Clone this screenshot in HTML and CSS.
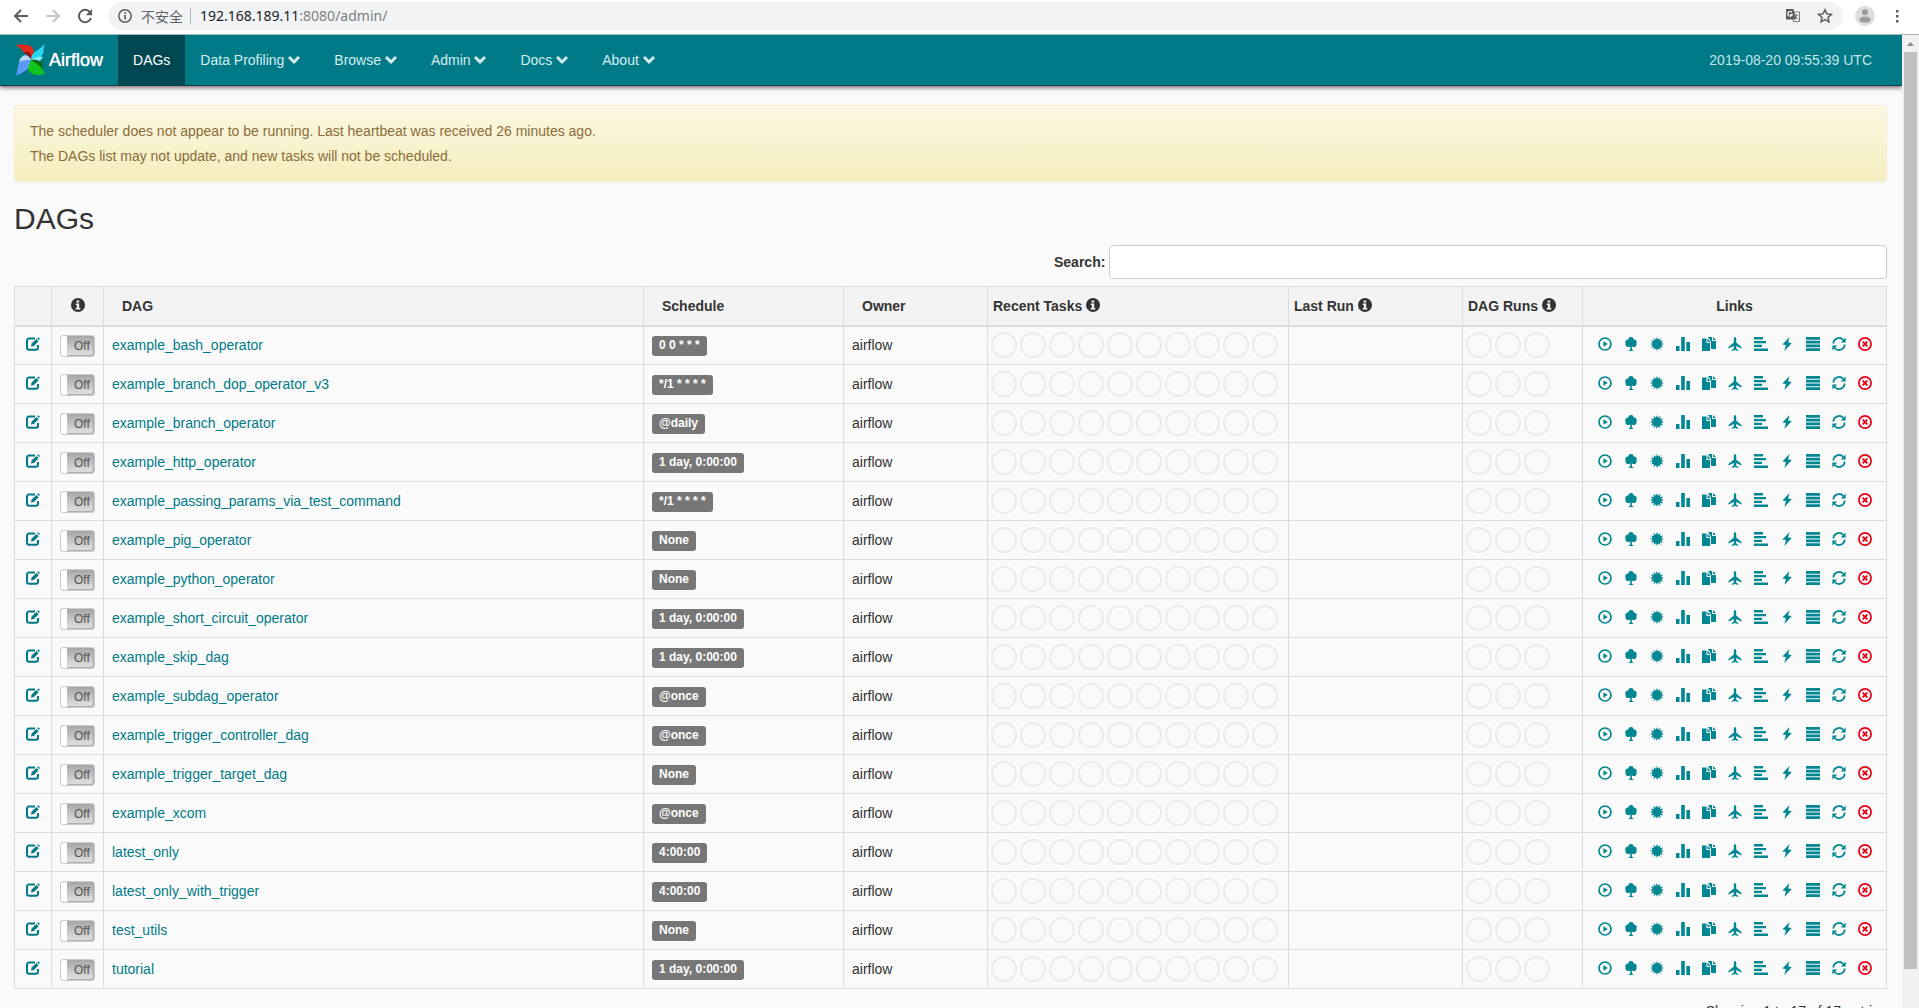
FILE: index.html
```html
<!DOCTYPE html>
<html lang="en">
<head>
	<meta charset="UTF-8">
	<title>Airflow - DAGs</title>
	<link rel="stylesheet" href="styles.css">
	<script src="dags.js" defer></script>
</head>
<body>
	<!-- icons, used with <use> -->
	<svg class="sprite" aria-hidden="true">
		<symbol id="i-chevron" viewBox="0 0 12 12"><path d="M1 3l5 5 5-5" fill="none" stroke="currentColor" stroke-width="3"/></symbol>
		<symbol id="i-info" viewBox="0 0 14 14"><circle cx="7" cy="7" r="7" fill="currentColor"/><path d="M5.600 2.400h2.600v2H5.600zM4.800 5.600h3.400v4.300h1.200v1.500H4.600V9.900h1.200V7H4.800z" fill="#f3f3f3"/></symbol>
		<symbol id="i-edit" viewBox="0 0 14 14"><path d="M9 1.500H3A2 2 0 0 0 1 3.500v7.200a2 2 0 0 0 2 2h7a2 2 0 0 0 2-2V8" fill="none" stroke="currentColor" stroke-width="2"/><path d="M5 9.600l.6-3L10.400 2l2.200 2.200-4.700 4.700zM11.200 1.200l1-1 1.800 1.800-1 1z" fill="currentColor"/></symbol>
		<symbol id="i-play" viewBox="0 0 14 14"><circle cx="7" cy="7" r="6" fill="none" stroke="currentColor" stroke-width="1.700"/><path d="M5.400 4.200l4.400 2.800-4.400 2.800z" fill="currentColor"/></symbol>
		<symbol id="i-tree" viewBox="0 0 14 14"><path d="M7 0a2.800 2.800 0 0 1 2.800 2.400 2.900 2.900 0 0 1 2.600 4.200A2.700 2.700 0 0 1 9.300 10L7.800 9.600v3l1.500 1v.4H4.700v-.4l1.500-1v-3L4.700 10a2.700 2.700 0 0 1-3.100-3.400 2.900 2.900 0 0 1 2.600-4.200A2.800 2.800 0 0 1 7 0z" fill="currentColor"/></symbol>
		<symbol id="i-sun" viewBox="0 0 14 14"><path d="M7 0L8.100 2.700 10.500.9 10.100 3.900 13.100 3.500 11.300 5.900 14 7 11.300 8.100 13.100 10.500 10.100 10.100 10.500 13.100 8.100 11.300 7 14 5.900 11.300 3.500 13.100 3.900 10.100.9 10.500 2.700 8.100 0 7 2.700 5.900.9 3.500 3.900 3.900 3.500.9 5.900 2.700z" fill="currentColor"/></symbol>
		<symbol id="i-stats" viewBox="0 0 14 14"><path d="M0 9h3.500v5H0zM5.200 0h3.600v14H5.200zM10.400 5H14v9h-3.600z" fill="currentColor"/></symbol>
		<symbol id="i-copy" viewBox="0 0 14 14"><path d="M0 1.500h4.500V6H8v8H0zM5.500 1.500L8.500 5h-3z" fill="currentColor"/><path d="M6 0h4v4h4v8H9V4.500zM11 0l3 3h-3z" fill="currentColor"/></symbol>
		<symbol id="i-plane" viewBox="0 0 14 14"><path d="M7 0c.8 0 1.200 1 1.200 2v3.400L13.500 10v1.400L8.200 9v2.500l2 1.600v.9L7 13l-3.200 1v-.9l2-1.600V9L.5 11.400V10l5.300-4.600V2c0-1 .4-2 1.200-2z" fill="currentColor"/></symbol>
		<symbol id="i-align" viewBox="0 0 14 14"><path d="M0 0h9v2.500H0zM0 4h12v2.300H0zM0 7.800h8v2.300H0zM0 11.600h14V14H0z" fill="currentColor"/></symbol>
		<symbol id="i-flash" viewBox="0 0 14 14"><path d="M9.600 0L2.400 7.400l3.500.5L4.400 14l7.400-8-3.700-.4z" fill="currentColor"/></symbol>
		<symbol id="i-list" viewBox="0 0 14 14"><path d="M0 0h14v2.800H0zM0 3.800h14v2.700H0zM0 7.500h14v2.700H0zM0 11.200h14V14H0z" fill="currentColor"/></symbol>
		<symbol id="i-refresh" viewBox="0 0 14 14"><path d="M1.400 6.500A5.600 5.600 0 0 1 11.300 3M12.600 7.500A5.600 5.600 0 0 1 2.700 11" fill="none" stroke="currentColor" stroke-width="1.800"/><path d="M13.600.6v5H8.800zM.4 13.400v-5h4.800z" fill="currentColor"/></symbol>
		<symbol id="i-remove" viewBox="0 0 14 14"><circle cx="7" cy="7" r="6.100" fill="none" stroke="currentColor" stroke-width="1.700"/><path d="M4.700 4.700l4.600 4.600M9.300 4.700L4.700 9.300" stroke="currentColor" stroke-width="1.900"/></symbol>
	</svg>

	<!-- browser toolbar -->
	<div class="toolbar">
		<button class="tool" aria-label="Back"><svg width="16" height="16" viewBox="0 0 16 16"><path d="M15 8H2M8 2L2 8l6 6" fill="none" stroke="#5a5d61" stroke-width="2"/></svg></button>
		<button class="tool" aria-label="Forward"><svg width="16" height="16" viewBox="0 0 16 16"><path d="M1 8h13M8 2l6 6-6 6" fill="none" stroke="#c3c5c8" stroke-width="2"/></svg></button>
		<button class="tool" aria-label="Reload"><svg width="16" height="16" viewBox="0 0 16 16"><path d="M13.200 4.500A6.200 6.200 0 1 0 14 10" fill="none" stroke="#5a5d61" stroke-width="2"/><path d="M15 1v6.300H8.700z" fill="#5a5d61"/></svg></button>
		<div class="address">
			<svg width="14" height="14" viewBox="0 0 14 14"><circle cx="7" cy="7" r="6.200" fill="none" stroke="#5a5d61" stroke-width="1.500"/><path d="M6.200 6h1.700v4.500H6.200zM6.200 3.300h1.700V5H6.200z" fill="#5a5d61"/></svg>
			<span class="insecure" lang="zh">不安全</span>
			<span class="url">192.168.189.11<span>:8080/admin/</span></span>
			<button class="tool" aria-label="Translate"><svg width="16" height="16" viewBox="0 0 16 16"><path d="M6 4h8.500v9.500H8.500L6 4z" fill="#fff" stroke="#77797c"/><path d="M1 1h7.500l3 10.500H1z" fill="#5a5d61"/><path d="M7 4.500A2.300 2.300 0 1 0 7.300 6.500H5" fill="none" stroke="#fff" stroke-width="1.200"/><path d="M9.500 7h4M11.500 6v1c0 2-1 3-2 4M11 9l2.500 2.500" fill="none" stroke="#77797c"/></svg></button>
			<button class="tool" aria-label="Bookmark"><svg width="16" height="16" viewBox="0 0 16 16"><path d="M8 1.800l1.900 4.100 4.500.5-3.400 3 1 4.400L8 11.500l-4 2.300 1-4.400-3.400-3 4.500-.5z" fill="none" stroke="#5a5d61" stroke-width="1.500"/></svg></button>
		</div>
		<button class="tool avatar" aria-label="Profile"><svg width="20" height="20" viewBox="0 0 20 20"><circle cx="10" cy="10" r="10" fill="#dcdcdc"/><circle cx="10" cy="6.300" r="3" fill="#9c9c9c"/><ellipse cx="10" cy="13.600" rx="5.600" ry="3" fill="#9c9c9c"/></svg></button>
		<button class="tool" aria-label="Menu"><svg width="16" height="16" viewBox="0 0 16 16"><path d="M7 2h2.500v2.500H7zM7 7h2.500v2.500H7zM7 12h2.500v2.500H7z" fill="#5a5d61"/></svg></button>
	</div>

	<div class="viewport">
		<div class="page">
			<nav class="navbar">
				<a class="brand" href="#">
					<svg width="32" height="34" viewBox="0 0 32 34">
						<path d="M1 2c7-1 13-1 17 2 3 4 2 9-1 13-2-4-3-6-7-7C8 6 5 4 1 2z" fill="#e32a1c"/>
						<path d="M11 9c4-1 6 2 7 6l-1 2c-2-4-3-6-7-7z" fill="#8d1410"/>
						<path d="M31 1c-2 5-1 8-2 10-3 4-7 6-12 6 0-5 3-8 7-10z" fill="#27d9f2"/>
						<path d="M17 17c5-3 9-4 12-3l-4 5z" fill="#8de9f5"/>
						<path d="M17 17c7 0 11 3 11 8l3 6c-7 2-13 1-16-3-3-4-1-8 2-11z" fill="#12c41c"/>
						<path d="M17 17c7-1 12 2 12 6l-1 3c-3-5-7-6-11-9z" fill="#0b6b12"/>
						<path d="M17 17c-5-4-11-2-12 3-2 4-1 8-3 12 8-2 13-6 13-10z" fill="#5c9cf8"/>
						<path d="M17 17c-3-7-10-6-12 2 4-2 7-2 12-2z" fill="#bcd8fb"/>
					</svg>
					<span>Airflow</span>
				</a>
				<ul class="nav">
					<li class="active"><a href="#">DAGs</a></li>
					<li><a href="#">Data Profiling <svg><use href="#i-chevron"/></svg></a></li>
					<li><a href="#">Browse <svg><use href="#i-chevron"/></svg></a></li>
					<li><a href="#">Admin <svg><use href="#i-chevron"/></svg></a></li>
					<li><a href="#">Docs <svg><use href="#i-chevron"/></svg></a></li>
					<li><a href="#">About <svg><use href="#i-chevron"/></svg></a></li>
				</ul>
				<span class="clock">2019-08-20 09:55:39 UTC</span>
			</nav>

			<div class="container">
				<div class="alert">
					<p>The scheduler does not appear to be running. Last heartbeat was received 26 minutes ago.</p>
					<p>The DAGs list may not update, and new tasks will not be scheduled.</p>
				</div>

				<h2>DAGs</h2>

				<div class="filter">
					<label for="search">Search:</label>
					<input type="search" id="search">
				</div>

				<table class="dags">
					<colgroup>
						<col class="c-edit"><col class="c-toggle"><col><col class="c-schedule"><col class="c-owner">
						<col class="c-tasks"><col class="c-last"><col class="c-runs"><col class="c-links">
					</colgroup>
					<thead>
						<tr>
							<th></th>
							<th class="center"><svg class="info"><use href="#i-info"/></svg></th>
							<th class="sort">DAG</th>
							<th class="sort">Schedule</th>
							<th class="sort">Owner</th>
							<th>Recent Tasks <svg class="info"><use href="#i-info"/></svg></th>
							<th>Last Run <svg class="info"><use href="#i-info"/></svg></th>
							<th>DAG Runs <svg class="info"><use href="#i-info"/></svg></th>
							<th class="center">Links</th>
						</tr>
					</thead>
					<tbody id="dagRows"></tbody>
				</table>

				<div class="table-info">Showing 1 to 17 of 17 entries</div>
			</div>
		</div>

		<div class="scrollbar">
			<svg width="17" height="17" viewBox="0 0 17 17"><path d="M5 11l3.500-4 3.500 4z" fill="#8c8c8c"/></svg>
			<div class="thumb"></div>
		</div>
	</div>
</body>
</html>
```

FILE: styles.css
```css
* {
	box-sizing: border-box;
}
body, h2, p, ul {
	margin: 0;
	padding: 0;
}
body {
	display: flex;
	flex-direction: column;
	height: 100vh;
	overflow: hidden;
	background: #fafafa;
	color: #333;
	font: 14px/20px "Liberation Sans", Arial, sans-serif;
}
a {
	color: #007a87;
	text-decoration: none;
}
.sprite {
	display: none;
}

/* browser toolbar */
.toolbar {
	display: flex;
	flex: none;
	align-items: center;
	height: 35px;
	padding: 0 14px 2px 13px;
	border-bottom: 1px solid #a5b5b7;
	background: #fff;
}
.tool {
	display: flex;
	padding: 0;
	border: 0;
	background: none;
}
.toolbar > .tool {
	margin-right: 16px;
}
.toolbar > .tool:last-child {
	margin-right: 0;
}
.toolbar > .avatar {
	margin: 0 14px 0 12px;
}
.address {
	display: flex;
	flex: 1;
	align-items: center;
	height: 28px;
	margin-left: -1px;
	padding: 0 10px;
	border-radius: 14px;
	background: #f1f3f4;
}
.insecure {
	margin-left: 9px;
	padding-right: 7px;
	border-right: 1px solid #b4b6b9;
	color: #5f6368;
	font: 14px/16px "Noto Sans CJK SC", sans-serif;
}
.url {
	flex: 1;
	margin-left: 9px;
	color: #202124;
	font: 14px/20px "Noto Sans", "Open Sans", sans-serif;
}
.url span {
	color: #7b7e82;
}
.address .tool + .tool {
	margin-left: 16px;
}

.viewport {
	display: flex;
	flex: 1;
	min-height: 0;
}
.page {
	flex: 1;
	overflow: hidden;
}

.navbar {
	display: flex;
	height: 51px;
	padding-right: 30px;
	border-bottom: 1px solid #00434a;
	background: #007a87;
	box-shadow: 0 2px 4px rgba(70, 20, 30, 0.6);
	line-height: 50px;
}
.brand {
	display: flex;
	align-items: center;
	padding: 0 15px 0 14px;
	color: #fff;
	font-size: 18px;
	text-shadow: 0 0 1px #fff;
}
.brand span {
	margin-left: 3px;
}
.nav {
	display: flex;
	flex: 1;
	list-style: none;
}
.nav a {
	display: block;
	padding: 0 15px;
	color: #d5edef;
}
.nav svg {
	width: 12px;
	height: 12px;
	margin-right: 4px;
	vertical-align: -1px;
}
.nav .active a {
	background: #004851;
	color: #fff;
}
.clock {
	color: #c5e5e8;
}

.container {
	padding: 19px 15px 19px 14px;
}
.alert {
	padding: 15px;
	border: 1px solid #f8efd2;
	border-radius: 4px;
	background: linear-gradient(#fcf8e3, #f5edbd);
	box-shadow: 0 1px 2px rgba(0, 0, 0, 0.05);
	color: #8a6d3b;
}
.alert p + p {
	margin-top: 5px;
}
h2 {
	margin: 20px 0 10px;
	color: #333;
	font-size: 30px;
	font-weight: 500;
	line-height: 33px;
}

.filter {
	display: flex;
	align-items: center;
	justify-content: flex-end;
	gap: 4px;
	width: 833px;
	max-width: 100%;
	margin: 0 0 7px auto;
	font-weight: bold;
}
.filter input {
	flex: 1;
	height: 34px;
	padding: 6px 12px;
	border: 1px solid #ccc;
	border-radius: 4px;
	background: #fff;
	font: inherit;
}

.dags {
	width: 100%;
	border-collapse: collapse;
	table-layout: fixed;
}
.c-edit { width: 37px; }
.c-toggle { width: 52px; }
.c-schedule { width: 200px; }
.c-owner { width: 144px; }
.c-tasks { width: 301px; }
.c-last { width: 174px; }
.c-runs { width: 120px; }
.c-links { width: 304px; }

.dags th,
.dags td {
	height: 39px;
	padding: 0 8px;
	border: 1px solid #ddd;
	text-align: left;
	white-space: nowrap;
}
.dags th {
	padding: 0 5px;
	border-bottom-width: 2px;
	background: #f3f3f3;
}
.dags th.sort {
	padding-left: 18px;
}
.dags .center {
	text-align: center;
}
.info {
	width: 14px;
	height: 14px;
	vertical-align: -1px;
}

.edit {
	display: flex;
	justify-content: center;
	padding-bottom: 2px;
}
.edit svg {
	width: 14px;
	height: 14px;
}
.toggle {
	display: flex;
	width: 35px;
	height: 22px;
	margin-top: 2px;
	border: 1px solid #ccc;
	border-radius: 3px;
	background: linear-gradient(#a6a6a6, #e3e3e3);
	box-shadow: inset -1px -1px 1px #aaa;
	color: #555;
	font-size: 12px;
	line-height: 21px;
}
.toggle input {
	width: 6px;
	height: 20px;
	margin: 0 7px 0 0;
	border-radius: 2px 0 0 2px;
	background: #fff;
	appearance: none;
}
.label {
	display: block;
	width: fit-content;
	margin-top: 2px;
	padding: 3px 7px 5px;
	border-radius: 3px;
	background: #777;
	color: #fff;
	font-size: 12px;
	font-weight: bold;
	line-height: 12px;
}
.dags .circles {
	padding: 0 3px;
}
.circles div {
	display: flex;
	gap: 3px;
}
.circles span {
	width: 26px;
	height: 26px;
	border: 2px solid #ebebeb;
	border-radius: 50%;
}
.links div {
	display: flex;
	justify-content: center;
	gap: 12px;
	padding-bottom: 2px;
}
.links a {
	display: flex;
	color: #008792;
}
.links svg {
	width: 14px;
	height: 14px;
}
.links .delete {
	color: #e60012;
}

.table-info {
	margin-top: 12px;
	text-align: right;
}

.scrollbar {
	width: 17px;
	background: #f1f1f1;
}
.scrollbar svg {
	display: block;
}
.thumb {
	height: 917px;
	margin: 0 2px;
	background: #c1c1c1;
}
```

FILE: dags.js
```js
var dags = [
	["example_bash_operator", "0 0 * * *"],
	["example_branch_dop_operator_v3", "*/1 * * * *"],
	["example_branch_operator", "@daily"],
	["example_http_operator", "1 day, 0:00:00"],
	["example_passing_params_via_test_command", "*/1 * * * *"],
	["example_pig_operator", "None"],
	["example_python_operator", "None"],
	["example_short_circuit_operator", "1 day, 0:00:00"],
	["example_skip_dag", "1 day, 0:00:00"],
	["example_subdag_operator", "@once"],
	["example_trigger_controller_dag", "@once"],
	["example_trigger_target_dag", "None"],
	["example_xcom", "@once"],
	["latest_only", "4:00:00"],
	["latest_only_with_trigger", "4:00:00"],
	["test_utils", "None"],
	["tutorial", "1 day, 0:00:00"]
];
var links = ["play", "tree", "sun", "stats", "copy", "plane", "align", "flash", "list", "refresh", "remove"];

function icon(name) {
	return '<svg><use href="#i-' + name + '"/></svg>';
}

function circles(n) {
	return '<td class="circles"><div>' + "<span></span>".repeat(n) + '</div></td>';
}

var linkHtml = "";
for (var i = 0; i < links.length; i++) {
	var cls = links[i] === "remove" ? ' class="delete"' : "";
	linkHtml += '<a href="#"' + cls + ' aria-label="' + links[i] + '">' + icon(links[i]) + '</a>';
}

var html = "";
for (var i = 0; i < dags.length; i++) {
	html += '<tr>' +
		'<td><a class="edit" href="#" aria-label="edit">' + icon("edit") + '</a></td>' +
		'<td><label class="toggle"><input type="checkbox">Off</label></td>' +
		'<td><a href="#">' + dags[i][0] + '</a></td>' +
		'<td><a class="label" href="#">' + dags[i][1] + '</a></td>' +
		'<td>airflow</td>' +
		circles(10) +
		'<td></td>' +
		circles(3) +
		'<td class="links"><div>' + linkHtml + '</div></td>' +
		'</tr>';
}
document.getElementById("dagRows").innerHTML = html;
```
